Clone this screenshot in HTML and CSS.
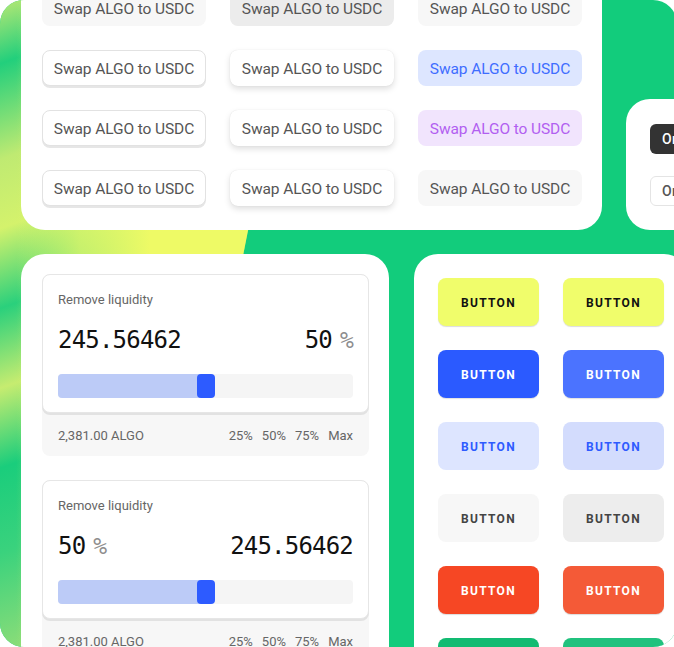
FILE: index.html
```html
<!DOCTYPE html>
<html lang="en">
<head>
<meta charset="utf-8">
<title>UI kit</title>
<link rel="stylesheet" href="styles.css">
</head>
<body>
<div class="stage">
  <div class="blob"></div>

  <div class="row row-top">
    <section class="card swap-card">
      <button class="swap s-soft">Swap ALGO to USDC</button>
      <button class="swap s-darker">Swap ALGO to USDC</button>
      <button class="swap s-soft">Swap ALGO to USDC</button>

      <button class="swap s-outline">Swap ALGO to USDC</button>
      <button class="swap s-raised">Swap ALGO to USDC</button>
      <button class="swap s-blue">Swap ALGO to USDC</button>

      <button class="swap s-outline">Swap ALGO to USDC</button>
      <button class="swap s-raised">Swap ALGO to USDC</button>
      <button class="swap s-purple">Swap ALGO to USDC</button>

      <button class="swap s-outline">Swap ALGO to USDC</button>
      <button class="swap s-raised">Swap ALGO to USDC</button>
      <button class="swap s-soft">Swap ALGO to USDC</button>
    </section>

    <section class="card toggle-card">
      <button class="toggle t-on">On</button>
      <button class="toggle t-off">On</button>
    </section>
  </div>

  <div class="row row-bottom">
    <section class="card liq-panel">
      <div class="liq">
        <div class="liq-card">
          <div class="liq-label">Remove liquidity</div>
          <div class="liq-values">
            <span class="num">245.56462</span>
            <span class="num">50<span class="pct">%</span></span>
          </div>
          <div class="track"><div class="fill"></div><div class="thumb"></div></div>
        </div>
        <div class="liq-foot">
          <span>2,381.00 ALGO</span>
          <span class="quick"><span>25%</span><span>50%</span><span>75%</span><span>Max</span></span>
        </div>
      </div>

      <div class="liq">
        <div class="liq-card">
          <div class="liq-label">Remove liquidity</div>
          <div class="liq-values">
            <span class="num">50<span class="pct">%</span></span>
            <span class="num">245.56462</span>
          </div>
          <div class="track"><div class="fill"></div><div class="thumb"></div></div>
        </div>
        <div class="liq-foot">
          <span>2,381.00 ALGO</span>
          <span class="quick"><span>25%</span><span>50%</span><span>75%</span><span>Max</span></span>
        </div>
      </div>
    </section>

    <section class="card btn-card">
      <button class="btn b-yellow">BUTTON</button>
      <button class="btn b-yellow">BUTTON</button>
      <button class="btn b-blue">BUTTON</button>
      <button class="btn b-blue2">BUTTON</button>
      <button class="btn b-light">BUTTON</button>
      <button class="btn b-light2">BUTTON</button>
      <button class="btn b-grey">BUTTON</button>
      <button class="btn b-grey2">BUTTON</button>
      <button class="btn b-red">BUTTON</button>
      <button class="btn b-red2">BUTTON</button>
      <button class="btn b-green">BUTTON</button>
      <button class="btn b-green2">BUTTON</button>
    </section>
  </div>
</div>
</body>
</html>
```

FILE: styles.css
```css
* { box-sizing: border-box; }

html, body {
  margin: 0;
  padding: 0;
  background: #ffffff;
}

body {
  width: 674px;
  height: 647px;
  overflow: hidden;
  font-family: Roboto, "Noto Sans", sans-serif;
}

button {
  font-family: inherit;
  border: 0;
  margin: 0;
  padding: 0;
  cursor: pointer;
}

.stage {
  position: relative;
  width: 677px;
  height: 647px;
  border-radius: 24px;
  overflow: hidden;
  background: #12cc7c;
  display: flex;
  flex-direction: column;
  gap: 24px;
  padding-left: 21px;
}

.blob {
  position: absolute;
  left: 0;
  top: 0;
  width: 300px;
  height: 647px;
  clip-path: polygon(0 0, 294px 0, 165px 647px, 0 647px);
  background:
    linear-gradient(90deg, rgba(238, 250, 102, 0) 16px, rgba(222, 246, 106, 0.8) 80px, #eefa66 150px),
    linear-gradient(160deg, #b9e874 0px, #22cf7c 60px, #bfea72 150px, #d4f26c 215px, #2ad07c 290px, #c6ec70 365px, #1acd7c 440px, #3ad27d 520px, #8fdd78 620px);
}

.row {
  position: relative;
  z-index: 1;
  display: flex;
}

.row-top {
  margin-top: -34px;
  align-items: flex-end;
  gap: 24px;
}

.row-bottom {
  align-items: flex-start;
  gap: 25px;
}

.card {
  background: #ffffff;
  border-radius: 24px;
  flex-shrink: 0;
}

/* swap buttons */
.swap-card {
  display: grid;
  grid-template-columns: repeat(3, 164px);
  grid-auto-rows: 36px;
  gap: 24px;
  padding: 24px 20px 24px 21px;
}

.swap {
  font-size: 15.5px;
  color: #555555;
  border-radius: 8px;
  background: #ffffff;
  letter-spacing: -0.1px;
  padding-top: 2px;
}

.s-soft { background: #f7f7f7; }
.s-darker { background: #ececec; }
.s-outline {
  border: 1px solid #e2e2e2;
  box-shadow: 0 2px 0 #e6e6e6;
}
.s-raised {
  box-shadow: 0 3px 6px rgba(0, 0, 0, 0.13), 0 0 1px rgba(0, 0, 0, 0.12);
}
.s-blue { background: #dde6ff; color: #3f6dff; }
.s-purple { background: #f1e4fd; color: #b15ff1; }

/* toggle card */
.toggle-card {
  width: 200px;
  padding: 25px 24px 24px;
  display: flex;
  flex-direction: column;
  align-items: flex-start;
  gap: 22px;
}

.toggle {
  height: 30px;
  width: 64px;
  border-radius: 6px;
  font-size: 14px;
  font-weight: 500;
  text-align: left;
  padding-left: 12px;
  letter-spacing: 0.3px;
}

.t-on { background: #333333; color: #ffffff; }
.t-off { background: #ffffff; color: #555555; border: 1px solid #e4e4e4; padding-left: 11px; }

/* liquidity */
.liq-panel {
  width: 368px;
  height: 420px;
  padding: 20px 20px 0 21px;
  display: flex;
  flex-direction: column;
  gap: 24px;
}

.liq {
  background: #f7f7f7;
  border-radius: 8px;
}

.liq-card {
  background: #ffffff;
  border: 1px solid #e6e6e6;
  border-radius: 8px;
  box-shadow: 0 2px 0 #e2e2e2;
  padding: 15px 15px 14px;
}

.liq-label {
  font-size: 13px;
  line-height: 20px;
  color: #666666;
}

.liq-values {
  margin-top: 14px;
  height: 32px;
  display: flex;
  justify-content: space-between;
  align-items: center;
}

.num {
  font-family: "DejaVu Sans Mono", "Liberation Mono", monospace;
  font-size: 24px;
  letter-spacing: -0.8px;
  color: #111111;
}

.pct {
  color: #8e8e8e;
  margin-left: 8px;
  font-size: 23px;
}

.track {
  margin-top: 18px;
  height: 24px;
  background: #f5f5f5;
  border-radius: 4px;
  display: flex;
}

.fill {
  width: 147px;
  background: #bccbf7;
  border-radius: 4px 0 0 4px;
}

.thumb {
  width: 18px;
  margin-left: -8px;
  background: #2d5bff;
  border-radius: 4px;
}

.liq-foot {
  display: flex;
  justify-content: space-between;
  padding: 13px 16px 10px;
  font-size: 13px;
  line-height: 20px;
  color: #666666;
}

.quick {
  display: flex;
  gap: 9px;
}

/* colored buttons */
.btn-card {
  width: 274px;
  height: 420px;
  padding: 24px;
  display: grid;
  grid-template-columns: repeat(2, 101px);
  grid-auto-rows: 48px;
  gap: 24px;
}

.btn {
  border-radius: 8px;
  font-size: 12px;
  font-weight: 700;
  letter-spacing: 1.3px;
  text-align: center;
  padding-top: 1px;
}

.b-yellow { background: #f0fd6b; color: #111111; box-shadow: 0 1px 1px rgba(0, 0, 0, 0.14); }
.b-blue { background: #2b5aff; color: #ffffff; box-shadow: 0 1px 1px rgba(0, 0, 0, 0.12); }
.b-blue2 { background: #4b73ff; color: #ffffff; box-shadow: 0 1px 1px rgba(0, 0, 0, 0.12); }
.b-light { background: #dde5ff; color: #2e5bff; }
.b-light2 { background: #d3dcfd; color: #2e5bff; }
.b-grey { background: #f7f7f7; color: #444444; }
.b-grey2 { background: #ededed; color: #444444; }
.b-red { background: #f64724; color: #ffffff; box-shadow: 0 1px 1px rgba(0, 0, 0, 0.14); }
.b-red2 { background: #f45a37; color: #ffffff; box-shadow: 0 1px 1px rgba(0, 0, 0, 0.14); }
.b-green { background: #12bb72; color: #ffffff; }
.b-green2 { background: #20c27e; color: #ffffff; }
```
